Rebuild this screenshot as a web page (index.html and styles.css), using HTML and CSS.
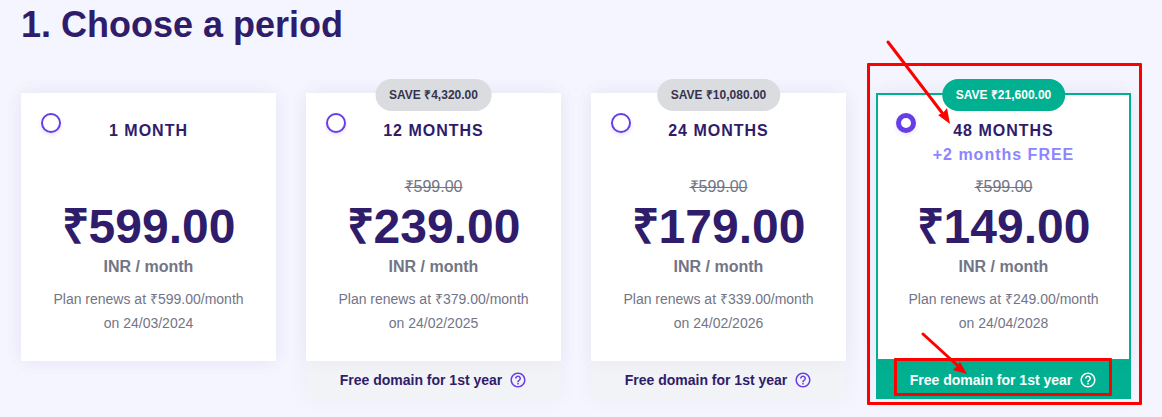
FILE: index.html
```html
<!DOCTYPE html>
<html lang="en">
<head>
    <meta charset="UTF-8">
    <meta name="viewport" content="width=device-width, initial-scale=1.0">
    <title>Choose a period</title>
    <link rel="stylesheet" href="styles.css">
</head>
<body>
    <!-- Shared help icon -->
    <svg class="sprite" aria-hidden="true">
        <symbol id="help" viewBox="0 0 24 24">
            <path d="M11 18h2v-2h-2v2zm1-16C6.48 2 2 6.48 2 12s4.48 10 10 10 10-4.48 10-10S17.52 2 12 2zm0 18c-4.41 0-8-3.59-8-8s3.59-8 8-8 8 3.59 8 8-3.59 8-8 8zm0-14c-2.21 0-4 1.79-4 4h2c0-1.1.9-2 2-2s2 .9 2 2c0 2-3 1.75-3 5h2c0-2.25 3-2.5 3-5 0-2.21-1.79-4-4-4z"/>
        </symbol>
    </svg>

    <main class="container">
        <h1>1. Choose a period</h1>
        <form class="plans">
            <div class="plan">
                <div class="plan-body">
                    <div class="plan-head">
                        <input type="radio" id="period1" name="period" value="1">
                        <label for="period1">1 MONTH</label>
                    </div>
                    <div class="old-price"></div>
                    <div class="price">₹599.00</div>
                    <div class="unit">INR / month</div>
                    <p class="renew">Plan renews at ₹599.00/month<br>on 24/03/2024</p>
                </div>
            </div>

            <div class="plan">
                <div class="plan-body">
                    <span class="badge">SAVE ₹4,320.00</span>
                    <div class="plan-head">
                        <input type="radio" id="period12" name="period" value="12">
                        <label for="period12">12 MONTHS</label>
                    </div>
                    <div class="old-price"><s>₹599.00</s></div>
                    <div class="price">₹239.00</div>
                    <div class="unit">INR / month</div>
                    <p class="renew">Plan renews at ₹379.00/month<br>on 24/02/2025</p>
                </div>
                <div class="plan-footer">
                    <span>Free domain for 1st year</span>
                    <button type="button" class="help" aria-label="Help"><svg><use href="#help"/></svg></button>
                </div>
            </div>

            <div class="plan">
                <div class="plan-body">
                    <span class="badge">SAVE ₹10,080.00</span>
                    <div class="plan-head">
                        <input type="radio" id="period24" name="period" value="24">
                        <label for="period24">24 MONTHS</label>
                    </div>
                    <div class="old-price"><s>₹599.00</s></div>
                    <div class="price">₹179.00</div>
                    <div class="unit">INR / month</div>
                    <p class="renew">Plan renews at ₹339.00/month<br>on 24/02/2026</p>
                </div>
                <div class="plan-footer">
                    <span>Free domain for 1st year</span>
                    <button type="button" class="help" aria-label="Help"><svg><use href="#help"/></svg></button>
                </div>
            </div>

            <div class="plan selected">
                <div class="plan-body">
                    <span class="badge">SAVE ₹21,600.00</span>
                    <div class="plan-head">
                        <input type="radio" id="period48" name="period" value="48" checked>
                        <label for="period48">48 MONTHS<span class="bonus">+2 months FREE</span></label>
                    </div>
                    <div class="old-price"><s>₹599.00</s></div>
                    <div class="price">₹149.00</div>
                    <div class="unit">INR / month</div>
                    <p class="renew">Plan renews at ₹249.00/month<br>on 24/04/2028</p>
                </div>
                <div class="plan-footer">
                    <span>Free domain for 1st year</span>
                    <button type="button" class="help" aria-label="Help"><svg><use href="#help"/></svg></button>
                </div>

                <!-- Red marks over the card -->
                <div class="mark mark-card"></div>
                <div class="mark mark-footer"></div>
                <svg class="arrow arrow-title" viewBox="0 0 70 90" aria-hidden="true">
                    <path class="line" d="M3 4L58 76"/>
                    <path class="tip" d="M65 86L53 77L58 75L62 70Z"/>
                </svg>
                <svg class="arrow arrow-footer" viewBox="0 0 50 46" aria-hidden="true">
                    <path class="line" d="M3 3L37 34"/>
                    <path class="tip" d="M47 43L33 39L37 35L40 31Z"/>
                </svg>
            </div>
        </form>
    </main>
</body>
</html>
```

FILE: styles.css
```css
* {
    box-sizing: border-box;
}
body {
    margin: 0;
    background: #f4f5ff;
    color: #727586;
    font-family: Arial, "Liberation Sans", sans-serif;
    font-size: 16px;
    line-height: 24px;
}
.sprite {
    display: none;
}
.container {
    padding: 1px 31px 18px 21px;
}
h1 {
    margin: 0 0 44px;
    color: #2f1c6a;
    font-size: 36px;
    line-height: 48px;
}
.plans {
    display: grid;
    grid-template-columns: repeat(4, 1fr);
    align-items: start;
    gap: 30px;
}
.plan {
    position: relative;
    text-align: center;
    box-shadow: 0 0 20px rgba(47, 28, 106, 0.04);
}
.plan-body {
    position: relative;
    padding: 18px 18px 24px;
    background: #fff;
    border: 2px solid #fff;
    box-shadow: 0 0 20px rgba(47, 28, 106, 0.04);
}
.badge {
    position: absolute;
    top: -16px;
    left: 50%;
    transform: translateX(-50%);
    padding: 0 14px;
    border-radius: 16px;
    background: #dadce0;
    color: #36344d;
    font-size: 12px;
    font-weight: bold;
    line-height: 32px;
    white-space: nowrap;
}
.plan-head {
    display: grid;
    grid-template-columns: 20px 1fr 20px;
    align-items: start;
    min-height: 62px;
}
.plan-head input {
    appearance: none;
    width: 20px;
    height: 20px;
    margin: 0;
    border: 2px solid #673de6;
    border-radius: 50%;
    background: #fff;
    box-shadow: 0 2px 4px rgba(103, 61, 230, 0.15);
}
.plan-head input:checked {
    border-width: 5px;
}
.plan-head label {
    padding-top: 6px;
    color: #2f1c6a;
    font-weight: bold;
    letter-spacing: 1px;
}
.bonus {
    display: block;
    color: #8c85ff;
}
.old-price {
    height: 24px;
    margin-bottom: 4px;
}
.price {
    margin-bottom: 4px;
    color: #2f1c6a;
    font-size: 48px;
    font-weight: bold;
    line-height: 48px;
}
.unit {
    margin-bottom: 8px;
    font-weight: bold;
}
.renew {
    margin: 0;
    font-size: 14px;
}
.plan-footer {
    display: flex;
    align-items: center;
    justify-content: center;
    gap: 7px;
    padding: 7px 0;
    background: #f2f3f6;
    color: #2f1c6a;
    font-size: 14px;
    font-weight: bold;
}
.help {
    display: flex;
    padding: 0;
    border: none;
    background: none;
    color: #673de6;
}
.help svg {
    width: 18px;
    height: 18px;
    fill: currentColor;
}
.selected .plan-body {
    border-color: #00b090;
}
.selected .badge,
.selected .plan-footer {
    background: #00b090;
    color: #fff;
}
.selected .help {
    color: #fff;
}
.mark {
    position: absolute;
    border: 3px solid #f00;
    border-radius: 1px;
    pointer-events: none;
}
.mark-card {
    top: -30px;
    right: -11px;
    bottom: -6px;
    left: -9px;
}
.mark-footer {
    right: 19px;
    bottom: 3px;
    left: 18px;
    height: 38px;
}
.arrow {
    position: absolute;
    pointer-events: none;
}
.arrow-title {
    top: -55px;
    left: 9px;
    width: 70px;
    height: 90px;
}
.arrow-footer {
    top: 238px;
    left: 44px;
    width: 50px;
    height: 46px;
}
.arrow .line {
    fill: none;
    stroke: #f00;
    stroke-width: 3;
    stroke-linecap: round;
}
.arrow .tip {
    fill: #f00;
}
```
